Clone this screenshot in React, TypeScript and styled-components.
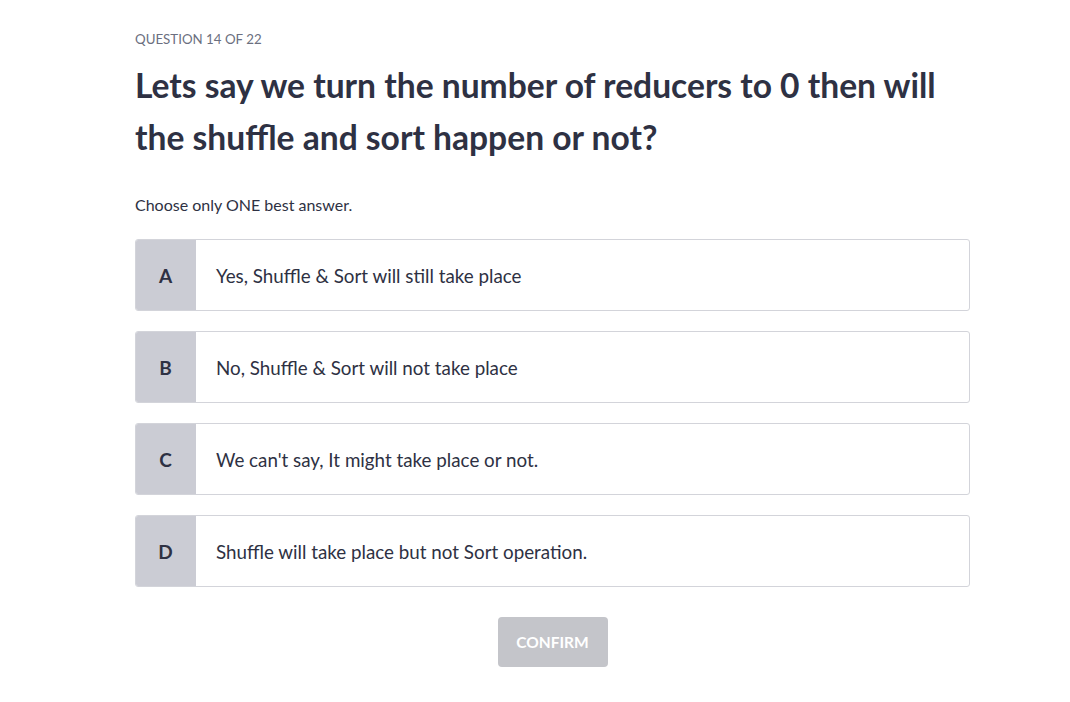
import React from "react";
import styled, { createGlobalStyle } from "styled-components";

const Global = createGlobalStyle`
  html, body { margin: 0; padding: 0; background: #ffffff; }
  body { font-family: Lato, "Liberation Sans", sans-serif; }
`;

const Page = styled.main`
  width: 835px;
  margin: 0 0 0 135px;
  padding-top: 30px;
  display: flex;
  flex-direction: column;
`;

const Eyebrow = styled.div`
  font-size: 13.3px;
  line-height: 18px;
  color: #6b6f80;
  text-transform: uppercase;
`;

const Title = styled.h1`
  margin: 11px 0 0;
  font-size: 33.6px;
  line-height: 52px;
  font-weight: 700;
  color: #2e3143;
  max-width: 820px;
`;

const Hint = styled.p`
  margin: 31px 0 0;
  font-size: 16px;
  line-height: 22px;
  color: #2e3143;
`;

const Options = styled.div`
  margin-top: 23px;
  display: flex;
  flex-direction: column;
  gap: 20px;
`;

const Option = styled.button`
  display: flex;
  align-items: stretch;
  width: 100%;
  height: 72px;
  padding: 0;
  border: 1px solid #d3d4da;
  border-radius: 3px;
  background: #ffffff;
  overflow: hidden;
  cursor: pointer;
  text-align: left;
  font-family: inherit;
`;

const Letter = styled.span`
  flex: 0 0 61px;
  margin: -1px 0 -1px -1px;
  background: #cbccd4;
  display: flex;
  align-items: center;
  justify-content: center;
  font-size: 19px;
  font-weight: 700;
  color: #2e3143;
`;

const Label = styled.span`
  flex: 1;
  display: flex;
  align-items: center;
  padding-left: 20px;
  font-size: 18.8px;
  color: #2e3143;
`;

const Footer = styled.div`
  display: flex;
  justify-content: center;
  margin-top: 30px;
`;

const Confirm = styled.button`
  width: 110px;
  height: 50px;
  border: none;
  border-radius: 4px;
  background: #c4c5ca;
  color: #ffffff;
  font-family: inherit;
  font-size: 15.5px;
  font-weight: 700;
  text-transform: uppercase;
  cursor: not-allowed;
`;

const options = [
  { key: "A", text: "Yes, Shuffle & Sort will still take place" },
  { key: "B", text: "No, Shuffle & Sort will not take place" },
  { key: "C", text: "We can't say, It might take place or not." },
  { key: "D", text: "Shuffle will take place but not Sort operation." },
];

export default function App() {
  return (
    <>
      <Global />
      <Page>
        <Eyebrow>Question 14 of 22</Eyebrow>
        <Title>Lets say we turn the number of reducers to 0 then will the shuffle and sort happen or not?</Title>
        <Hint>Choose only ONE best answer.</Hint>
        <Options>
          {options.map((o) => (
            <Option key={o.key} type="button">
              <Letter>{o.key}</Letter>
              <Label>{o.text}</Label>
            </Option>
          ))}
        </Options>
        <Footer>
          <Confirm type="button" disabled>Confirm</Confirm>
        </Footer>
      </Page>
    </>
  );
}
